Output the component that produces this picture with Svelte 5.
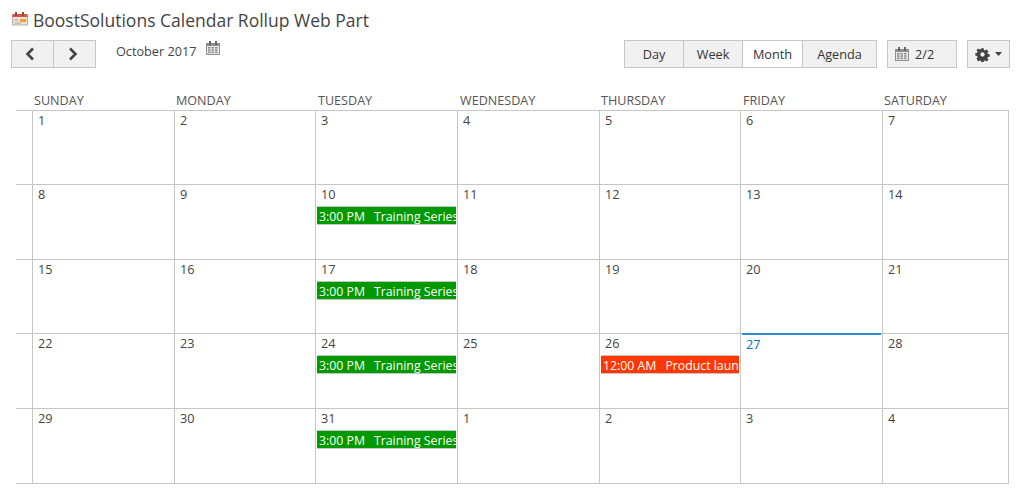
<script lang="ts">
  const dayNames = ['SUNDAY', 'MONDAY', 'TUESDAY', 'WEDNESDAY', 'THURSDAY', 'FRIDAY', 'SATURDAY']
  const views = ['Day', 'Week', 'Month', 'Agenda']
  const training = { time: '3:00 PM', title: 'Training Series', color: 'green' }
  const launch = { time: '12:00 AM', title: 'Product launch', color: 'red' }

  const weeks = [
    [{ n: 1 }, { n: 2 }, { n: 3 }, { n: 4 }, { n: 5 }, { n: 6 }, { n: 7 }],
    [{ n: 8 }, { n: 9 }, { n: 10, ev: training }, { n: 11 }, { n: 12 }, { n: 13 }, { n: 14 }],
    [{ n: 15 }, { n: 16 }, { n: 17, ev: training }, { n: 18 }, { n: 19 }, { n: 20 }, { n: 21 }],
    [{ n: 22 }, { n: 23 }, { n: 24, ev: training }, { n: 25 }, { n: 26, ev: launch }, { n: 27, today: true }, { n: 28 }],
    [{ n: 29 }, { n: 30 }, { n: 31, ev: training }, { n: 1 }, { n: 2 }, { n: 3 }, { n: 4 }],
  ]
</script>

{#snippet calIcon(size)}
  <svg width={size} height={size} viewBox="0 0 16 16">
    <rect x="1" y="3" width="14" height="12" fill="#8f8f8f" />
    <rect x="4" y="1" width="2" height="4" fill="#666" />
    <rect x="10" y="1" width="2" height="4" fill="#666" />
    <rect x="2" y="6" width="12" height="8" fill="#e9e9e9" />
    {#each [3, 6.5, 10] as x}
      {#each [7, 9.3, 11.6] as y}
        <rect {x} {y} width="2.5" height="1.5" fill="#8a8a8a" />
      {/each}
    {/each}
  </svg>
{/snippet}

<div class="page">
  <h1>
    <svg class="title-icon" width="16" height="14" viewBox="0 0 16 14">
      <rect x="0.5" y="3" width="15" height="10" fill="#e8e2d8" stroke="#b9b2a8" />
      <rect x="0.5" y="2" width="15" height="3" fill="#d9534a" />
      <rect x="3" y="0" width="2" height="4" fill="#8d4a40" />
      <rect x="10" y="0" width="2" height="4" fill="#8d4a40" />
      <rect x="8" y="7" width="6" height="3" fill="#f0a030" />
      <rect x="3" y="7" width="3" height="2" fill="#c9c3b8" />
      <rect x="3" y="10" width="6" height="2" fill="#c9c3b8" />
    </svg>
    BoostSolutions Calendar Rollup Web Part
  </h1>

  <div class="toolbar">
    <div class="btn-group nav">
      <button aria-label="Previous">
        <svg width="12" height="14" viewBox="0 0 12 14"><path d="M9 1.5 3.5 7 9 12.500" fill="none" stroke="#444" stroke-width="2.6" /></svg>
      </button>
      <button aria-label="Next">
        <svg width="12" height="14" viewBox="0 0 12 14"><path d="M3 1.5 8.5 7 3 12.500" fill="none" stroke="#444" stroke-width="2.6" /></svg>
      </button>
    </div>
    <div class="month-label">
      <span>October 2017</span>
      {@render calIcon(16)}
    </div>
    <div class="btn-group views">
      {#each views as view}
        <button class:active={view === 'Month'}>{view}</button>
      {/each}
    </div>
    <button class="calendars">
      {@render calIcon(16)}
      <span>2/2</span>
    </button>
    <button class="settings" aria-label="Settings">
      <svg width="15" height="15" viewBox="0 0 14 14">
        <path d="M5.700 0h2.600l.4 2 1.300.6 1.800-1.100 1.800 1.800-1.100 1.800.5 1.300 2 .4v2.600l-2 .4-.5 1.300 1.100 1.800-1.800 1.800-1.800-1.100-1.300.5-.4 2H5.700l-.4-2-1.300-.5-1.800 1.100L.4 11.700l1.100-1.800-.5-1.300-2-.4V5.600l2-.4.5-1.300L.4 2.100 2.200.3 4 1.400l1.300-.5z" transform="translate(1.100 1.100) scale(.84)" fill="#444" />
        <circle cx="7" cy="7" r="2" fill="#f1f1f1" />
      </svg>
      <svg width="7" height="4" viewBox="0 0 7 4"><path d="M0 0h7L3.500 4z" fill="#444" /></svg>
    </button>
  </div>

  <div class="head-row">
    {#each dayNames as name}
      <div class="head">{name}</div>
    {/each}
  </div>

  <div class="month">
    {#each weeks as week}
      <div class="week">
        {#each week as day}
          <div class="cell" class:today={day.today}>
            <div class="num">{day.n}</div>
            {#if day.ev}
              <div class="event {day.ev.color}">
                <span class="time">{day.ev.time}</span>{day.ev.title}
              </div>
            {/if}
          </div>
        {/each}
      </div>
    {/each}
  </div>
</div>

<style>
  :global(body) {
    background: #fff;
    font-family: 'Open Sans', 'Noto Sans', sans-serif;
    color: #444;
  }
  .page {
    width: 1016px;
    height: 490px;
    overflow: hidden;
  }
  h1 {
    margin: 0;
    padding: 9px 0 0 12px;
    height: 31px;
    box-sizing: border-box;
    display: flex;
    align-items: center;
    gap: 5px;
    font-size: 17.5px;
    font-weight: 400;
    line-height: 22px;
    white-space: nowrap;
  }
  .title-icon {
    margin-top: -3px;
  }
  .toolbar {
    display: flex;
    align-items: flex-start;
    padding: 9px 0 0 11px;
    height: 27px;
    margin-bottom: 24px;
  }
  button {
    font: inherit;
    color: #333;
    background: #f1f1f1;
    border: 1px solid #c6c6c6;
    padding: 0;
    box-sizing: border-box;
    height: 28px;
    display: flex;
    align-items: center;
    justify-content: center;
  }
  .btn-group {
    display: flex;
  }
  .btn-group button + button {
    margin-left: -1px;
  }
  .nav button {
    width: 43px;
    padding-right: 4px;
  }
  .nav button:first-child {
    padding-right: 5px;
  }
  .month-label {
    display: flex;
    align-items: flex-start;
    gap: 8px;
    margin-left: 20px;
    font-size: 12.7px;
    line-height: 22px;
    width: 508px;
    height: 20px;
  }
  .views {
    margin-right: 10px;
  }
  .views button {
    font-size: 12.7px;
    height: 28px;
  }
  .views button:nth-child(1),
  .views button:nth-child(2) {
    width: 60px;
  }
  .views button:nth-child(3) {
    width: 61px;
  }
  .views button:nth-child(4) {
    width: 75px;
  }
  .views .active {
    background: #fff;
  }
  .calendars {
    width: 70px;
    gap: 5px;
    font-size: 12.7px;
    margin-right: 10px;
    justify-content: flex-start;
    padding-left: 6px;
  }
  .settings {
    width: 43px;
    gap: 5px;
  }
  .head-row {
    display: grid;
    grid-template-columns: 142px 142px 142px 141px 142px 141px 127px;
    margin-left: 32px;
  }
  .head {
    height: 19px;
    font-size: 12.6px;
    line-height: 19px;
    padding-left: 2px;
    color: #555;
  }
  .month {
    width: 993px;
    margin-left: 16px;
    border-top: 1px solid #c6c6c6;
  }
  .week {
    display: grid;
    grid-template-columns: 142px 141px 142px 142px 141px 142px 127px;
    height: 74px;
    box-sizing: border-box;
    padding-left: 16px;
    border-bottom: 1px solid #c6c6c6;
  }
  .week:nth-child(even),
  .week:last-child {
    height: 75px;
  }
  .cell {
    position: relative;
    border-left: 1px solid #c6c6c6;
    min-width: 0;
  }
  .cell:last-child {
    border-right: 1px solid #c6c6c6;
  }
  .num {
    height: 20px;
    padding-left: 5px;
    font-size: 12.7px;
    line-height: 19px;
  }
  .today::before {
    content: '';
    position: absolute;
    left: 1px;
    right: 1px;
    top: -1px;
    z-index: 1;
    border-top: 2px solid #2a8dd4;
  }
  .today .num {
    color: #0072c6;
    padding-top: 1px;
  }
  .event {
    height: 19px;
    margin: 1px 1px 0 1px;
    padding-left: 2px;
    font-size: 12.3px;
    line-height: 19px;
    color: #fff;
    white-space: nowrap;
    overflow: hidden;
    border: 1px solid #c6c6c6;
    border-width: 1px 0;
    box-sizing: border-box;
  }
  .event .time {
    margin-right: 9px;
  }
  .green {
    background: #009a00;
  }
  .red {
    background: #ff3700;
  }
</style>
